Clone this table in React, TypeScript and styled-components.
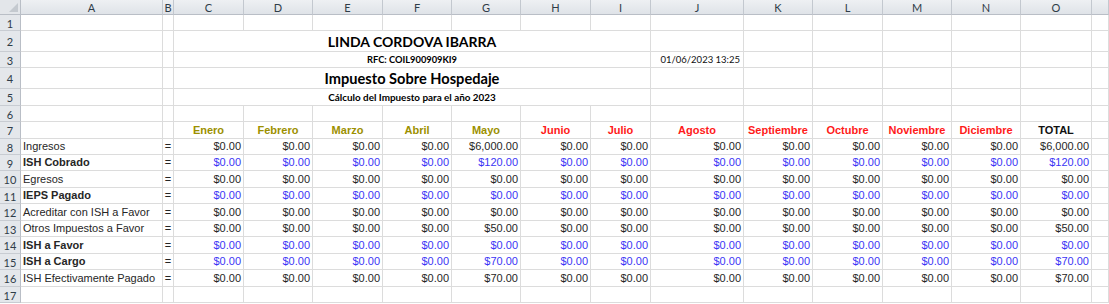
import * as React from 'react';
import styled, { createGlobalStyle } from 'styled-components';

const GlobalStyle = createGlobalStyle`
  html, body { margin: 0; padding: 0; background: #fff; }
  * { box-sizing: border-box; }
`;

const COLS = [21, 142, 11, 70, 69, 70, 69, 69, 70, 60, 93, 69, 70, 69, 69, 71, 17];
const ROWS = [15, 16, 21, 16, 21, 17, 16, 17, 16, 16, 17, 16, 17, 16, 17, 16, 17, 16];
const LETTERS = ['A', 'B', 'C', 'D', 'E', 'F', 'G', 'H', 'I', 'J', 'K', 'L', 'M', 'N', 'O', ''];

const OLIVE = '#9c9000';
const RED = '#ff1a1a';
const BLUE = '#3b35f5';
const INK = '#262626';

const months = [
  { name: 'Enero', color: OLIVE },
  { name: 'Febrero', color: OLIVE },
  { name: 'Marzo', color: OLIVE },
  { name: 'Abril', color: OLIVE },
  { name: 'Mayo', color: OLIVE },
  { name: 'Junio', color: RED },
  { name: 'Julio', color: RED },
  { name: 'Agosto', color: RED },
  { name: 'Septiembre', color: RED },
  { name: 'Octubre', color: RED },
  { name: 'Noviembre', color: RED },
  { name: 'Diciembre', color: RED },
  { name: 'TOTAL', color: '#111' },
];

// valor del mes de mayo y del total; los demás son $0.00
const concepts = [
  { label: 'Ingresos', strong: false, may: '$6,000.00' },
  { label: 'ISH Cobrado', strong: true, may: '$120.00' },
  { label: 'Egresos', strong: false, may: '$0.00' },
  { label: 'IEPS Pagado', strong: true, may: '$0.00' },
  { label: 'Acreditar con ISH a Favor', strong: false, may: '$0.00' },
  { label: 'Otros Impuestos a Favor', strong: false, may: '$50.00' },
  { label: 'ISH a Favor', strong: true, may: '$0.00' },
  { label: 'ISH a Cargo', strong: true, may: '$70.00' },
  { label: 'ISH Efectivamente Pagado', strong: false, may: '$70.00' },
];

const Sheet = styled.div`
  display: grid;
  grid-template-columns: ${COLS.map((c) => c + 'px').join(' ')};
  grid-template-rows: ${ROWS.map((r) => r + 'px').join(' ')};
  width: 1109px;
  height: 304px;
  overflow: hidden;
  background: #fff;
  font-family: 'Liberation Sans', Arial, sans-serif;
`;

const Corner = styled.div`
  position: relative;
  background: #e3e6ea;
  border-right: 1px solid #b9bec6;
  border-bottom: 1px solid #b9bec6;

  &::after {
    content: '';
    position: absolute;
    right: 2px;
    bottom: 2px;
    border-left: 9px solid transparent;
    border-bottom: 9px solid #c4c9cf;
  }
`;

const ColHead = styled.div`
  display: flex;
  align-items: center;
  justify-content: center;
  background: linear-gradient(#eef0f3, #dfe3e8);
  border-right: 1px solid #c3c8cf;
  border-bottom: 1px solid #b9bec6;
  color: #2f3c48;
  font-family: Lato, 'Open Sans', sans-serif;
  font-size: 11px;
`;

const RowHead = styled.div`
  display: flex;
  align-items: center;
  justify-content: center;
  background: #e4e7eb;
  border-right: 1px solid #b9bec6;
  border-bottom: 1px solid #c8ccd2;
  color: #2f3c48;
  font-family: Lato, 'Open Sans', sans-serif;
  font-size: 11px;
  padding-top: 1px;
`;

const Cell = styled.div<{ $align?: string; $color?: string; $bold?: boolean; $span?: number }>`
  grid-column: span ${(p) => p.$span || 1};
  display: flex;
  align-items: flex-end;
  justify-content: ${(p) => p.$align || 'flex-start'};
  padding: 0 2px 1px 2px;
  border-right: 1px solid #dcdcdc;
  border-bottom: 1px solid #dcdcdc;
  color: ${(p) => p.$color || INK};
  font-size: 11px;
  line-height: 13px;
  font-weight: ${(p) => (p.$bold ? 700 : 400)};
  white-space: nowrap;
  overflow: hidden;
`;

const Title = styled(Cell)<{ $size: number }>`
  justify-content: center;
  align-items: center;
  padding: 0;
  font-family: Lato, 'Open Sans', sans-serif;
  font-size: ${(p) => p.$size}px;
  font-weight: 700;
  color: #000;
`;

const Stamp = styled(Cell)`
  font-family: Lato, 'Open Sans', sans-serif;
  font-size: 9.5px;
  color: #111;
  padding-right: 3px;
`;

const blanks = (from: number, n: number, rowKey: string) =>
  Array.from({ length: n }, (_, i) => <Cell key={`${rowKey}-${from + i}`} />);

export default function App() {
  const titleRows: Record<number, { text: string; size: number }> = {
    2: { text: 'LINDA CORDOVA IBARRA', size: 14 },
    3: { text: 'RFC: COIL900909KI9', size: 9.3 },
    4: { text: 'Impuesto Sobre Hospedaje', size: 14.6 },
    5: { text: 'Cálculo del Impuesto para el año 2023', size: 9.9 },
  };

  const out: React.ReactNode[] = [];

  out.push(<Corner key="corner" />);
  LETTERS.forEach((l, i) => out.push(<ColHead key={`h${i}`}>{l}</ColHead>));

  for (let r = 1; r <= 17; r++) {
    const k = `r${r}`;
    out.push(<RowHead key={`${k}-n`}>{r}</RowHead>);

    if (titleRows[r]) {
      out.push(...blanks(0, 2, k));
      out.push(
        <Title key={`${k}-t`} $span={7} $size={titleRows[r].size}>
          {titleRows[r].text}
        </Title>
      );
      if (r === 3) {
        out.push(
          <Stamp key={`${k}-j`} $align="flex-end">
            01/06/2023 13:25
          </Stamp>
        );
      } else {
        out.push(<Cell key={`${k}-j`} />);
      }
      out.push(...blanks(10, 6, k));
    } else if (r === 7) {
      out.push(...blanks(0, 2, k));
      months.forEach((m) =>
        out.push(
          <Cell key={`${k}-${m.name}`} $align="center" $color={m.color} $bold>
            {m.name}
          </Cell>
        )
      );
      out.push(<Cell key={`${k}-p`} />);
    } else if (r >= 8 && r <= 16) {
      const c = concepts[r - 8];
      const tint = c.strong ? BLUE : INK;
      out.push(
        <Cell key={`${k}-a`} $bold={c.strong}>
          {c.label}
        </Cell>
      );
      out.push(
        <Cell key={`${k}-b`} $align="center">
          =
        </Cell>
      );
      months.forEach((m, i) => {
        const v = i === 4 || i === 12 ? c.may : '$0.00';
        out.push(
          <Cell key={`${k}-${m.name}`} $align="flex-end" $color={tint}>
            {v}
          </Cell>
        );
      });
      out.push(<Cell key={`${k}-p`} />);
    } else {
      out.push(...blanks(0, 16, k));
    }
  }

  return (
    <>
      <GlobalStyle />
      <Sheet>{out}</Sheet>
    </>
  );
}
